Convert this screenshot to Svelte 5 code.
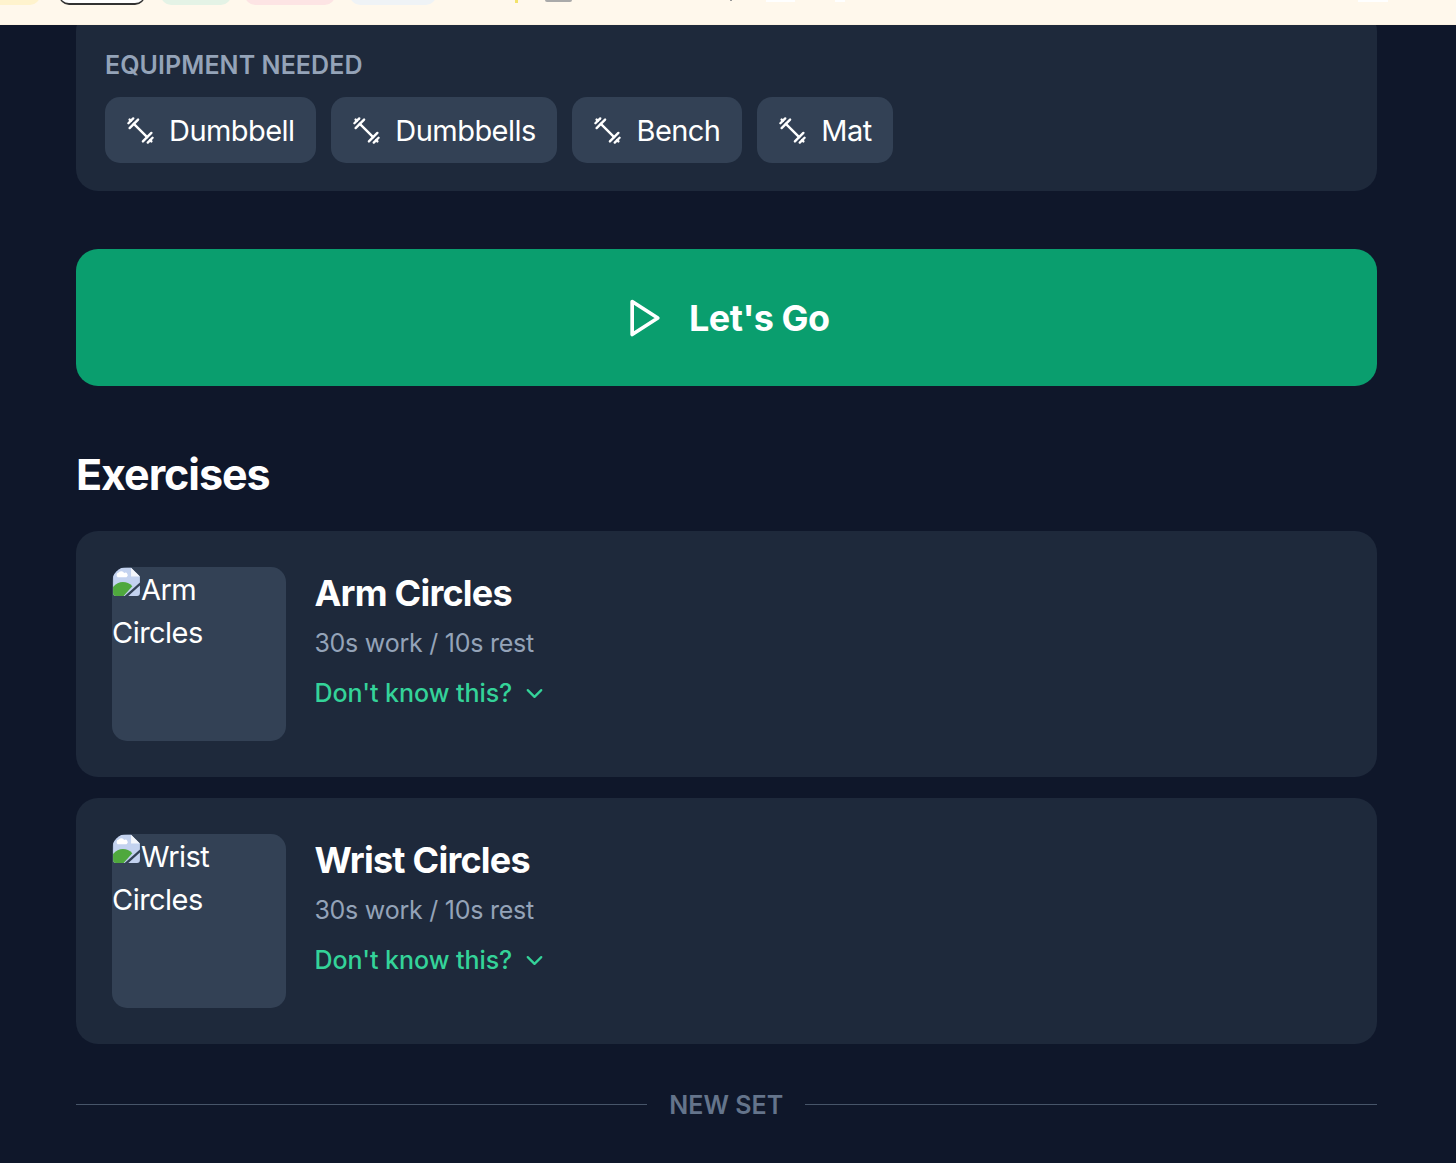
<script>
	const equipment = ["Dumbbell", "Dumbbells", "Bench", "Mat"];
	const exercises = [
		{ name: "Arm Circles", detail: "30s work / 10s rest" },
		{ name: "Wrist Circles", detail: "30s work / 10s rest" }
	];
	const pills = ["yellow", "active", "green", "pink", "blue"];
</script>

<div class="page">
	<header class="topbar">
		{#each pills as pill}
			<span class="pill {pill}"></span>
		{/each}
		<span class="speck star"></span>
		<span class="speck box"></span>
		<span class="speck dot"></span>
		<span class="speck glow one"></span>
		<span class="speck glow two"></span>
		<span class="speck glow three"></span>
	</header>

	<main class="content">
		<section class="card equipment">
			<h3>EQUIPMENT NEEDED</h3>
			<div class="tags">
				{#each equipment as item}
					<span class="tag">
						<svg class="dumbbell" viewBox="0 0 24 24" fill="none" stroke="currentColor" stroke-width="2" stroke-linecap="round" stroke-linejoin="round">
							<path d="M6.5 6.5l11 11" />
							<path d="M21 21l-1-1" />
							<path d="M3 3l1 1" />
							<path d="M18 22l4-4" />
							<path d="M2 6l4-4" />
							<path d="M3 10l7-7" />
							<path d="M14 21l7-7" />
						</svg>
						{item}
					</span>
				{/each}
			</div>
		</section>

		<button class="go">
			<svg viewBox="0 0 24 24" fill="none" stroke="currentColor" stroke-width="2" stroke-linecap="round" stroke-linejoin="round">
				<polygon points="5 3 19 12 5 21 5 3" />
			</svg>
			Let's Go
		</button>

		<h2>Exercises</h2>

		<div class="list">
			{#each exercises as ex}
				<article class="card exercise">
					<div class="thumb">
						<svg class="broken" viewBox="0 0 16 16">
							<path d="M.6 2Q.6 .4 2.2 .4H10.5L15.4 5.2V8.6L7 16H2.2Q.6 16 .6 14.4Z" fill="#c3d2ef" />
							<path d="M10.5 .4V5.2H15.4Z" fill="#f4f6fb" />
							<path d="M3.1 5.6a1.4 1.4 0 0 1 .6-2.5a1.7 1.7 0 0 1 3 .2a1.2 1.2 0 0 1 1.3 2.3Z" fill="#fff" />
							<path d="M.6 12.5V11Q3 8.3 6 8.3Q9 8.3 11.2 10.6L6.4 16H2.2Q.6 16 .6 14.4Z" fill="#4fa83d" />
							<path d="M9 16L15.4 10.2V14.4Q15.4 16 13.8 16Z" fill="#c3d2ef" />
						</svg>{ex.name}
					</div>
					<div class="info">
						<h4>{ex.name}</h4>
						<p>{ex.detail}</p>
						<span class="help">
							Don't know this?
							<svg viewBox="0 0 24 24" fill="none" stroke="currentColor" stroke-width="2" stroke-linecap="round" stroke-linejoin="round">
								<path d="M6 9l6 6 6-6" />
							</svg>
						</span>
					</div>
				</article>
			{/each}
		</div>

		<div class="divider">
			<span class="line"></span>
			<span class="label">NEW SET</span>
			<span class="line"></span>
		</div>
	</main>
</div>

<style>
	:global(body) {
		margin: 0;
		background: #0f172a;
	}

	.page {
		height: 1163px;
		overflow: hidden;
		background: #0f172a;
		font-family: Inter, "Liberation Sans", sans-serif;
		color: #fff;
	}

	.topbar {
		position: relative;
		z-index: 2;
		box-sizing: border-box;
		height: 25px;
		background: #fff8ec;
		border-bottom: 1px solid #fdf3e2;
		overflow: hidden;
	}

	.pill {
		position: absolute;
		bottom: 19px;
		height: 30px;
		border-radius: 10px;
	}

	.pill.yellow { left: -30px; width: 70px; background: #fff3cd; }
	.pill.active { left: 59px; width: 84px; background: #fff; border: 1px solid #333; border-bottom-width: 2px; }
	.pill.green { left: 161px; width: 70px; background: #e4f3e6; }
	.pill.pink { left: 245px; width: 90px; background: #fde4e4; }
	.pill.blue { left: 350px; width: 86px; background: #eff3f6; }

	.speck {
		position: absolute;
		top: 0;
	}

	.star { left: 515px; width: 3px; height: 3px; background: #f3e36b; }
	.box { left: 545px; width: 27px; height: 2px; background: #aaa; border-radius: 0 0 4px 4px; }
	.dot { left: 730px; width: 2px; height: 1px; background: #999; }
	.glow { height: 2px; background: #fff; }
	.one { left: 766px; width: 29px; }
	.two { left: 835px; width: 10px; }
	.three { left: 1358px; width: 30px; }

	.content {
		padding: 0 79.5px 0 76px;
	}

	.card {
		background: #1e293b;
		border-radius: 22px;
	}

	.equipment {
		margin-top: -16px;
		height: 182px;
		box-sizing: border-box;
		padding: 41px 29px 0;
	}

	h3 {
		margin: 0;
		font-size: 25px;
		line-height: 30px;
		font-weight: 600;
		letter-spacing: 0.07px;
		color: #94a3b8;
	}

	.tags {
		display: flex;
		gap: 15.3px;
		margin-top: 17px;
	}

	.tag {
		display: flex;
		align-items: center;
		gap: 14px;
		box-sizing: border-box;
		height: 65.5px;
		padding: 1px 21.5px 0 21px;
		background: #334155;
		border-radius: 15px;
		font-size: 29px;
		letter-spacing: -0.55px;
		color: #fff;
	}

	.dumbbell {
		width: 29px;
		height: 29px;
	}

	.go {
		display: flex;
		align-items: center;
		justify-content: center;
		gap: 22px;
		width: 100%;
		height: 137px;
		margin-top: 58px;
		padding: 0;
		border: 0;
		border-radius: 22px;
		background: #0a9e6e;
		color: #fff;
		font-family: inherit;
		font-size: 36px;
		font-weight: 700;
		letter-spacing: -0.5px;
	}

	.go svg {
		width: 44px;
		height: 44px;
	}

	h2 {
		margin: 62px 0 0;
		font-size: 43px;
		line-height: 52px;
		font-weight: 700;
		letter-spacing: -1.05px;
	}

	.list {
		display: flex;
		flex-direction: column;
		gap: 21.7px;
		margin-top: 31px;
	}

	.exercise {
		display: flex;
		gap: 28.8px;
		box-sizing: border-box;
		height: 245.7px;
		padding: 36.1px;
	}

	.thumb {
		box-sizing: border-box;
		flex: none;
		width: 173.5px;
		height: 173.5px;
		overflow: hidden;
		background: #334155;
		border-radius: 15px;
		font-size: 29px;
		line-height: 43px;
		letter-spacing: -0.55px;
	}

	.broken {
		width: 29px;
		height: 29px;
		vertical-align: 4px;
	}

	.info {
		display: flex;
		flex-direction: column;
	}

	h4 {
		margin: 4px 0 0;
		font-size: 36px;
		line-height: 44px;
		font-weight: 700;
		letter-spacing: -0.76px;
	}

	p {
		margin: 13px 0 0;
		font-size: 25px;
		line-height: 30px;
		letter-spacing: -0.24px;
		color: #94a3b8;
	}

	.help {
		display: flex;
		align-items: center;
		gap: 8.5px;
		margin-top: 20px;
		font-size: 25px;
		line-height: 30px;
		font-weight: 500;
		letter-spacing: -0.05px;
		color: #34d399;
	}

	.help svg {
		width: 27px;
		height: 27px;
	}

	.divider {
		display: flex;
		align-items: center;
		gap: 22px;
		margin-top: 45.5px;
	}

	.line {
		flex: 1;
		height: 1px;
		background: #475569;
	}

	.label {
		font-size: 25px;
		line-height: 30px;
		font-weight: 600;
		color: #64748b;
	}
</style>
